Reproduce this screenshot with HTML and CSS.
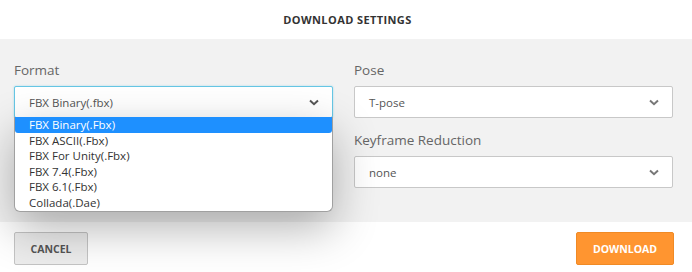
FILE: index.html
```html
<!DOCTYPE html>
<html>
<head>
    <title>Download Settings</title>
    <link rel="stylesheet" href="styles.css">
</head>
<body>
    <div class="dialog">
        <div class="title">DOWNLOAD SETTINGS</div>

        <div class="settings">
            <div class="column">
                <div class="form-group">
                    <label>Format</label>
                    <div class="select-wrap">
                        <div class="select focused">
                            <span>FBX Binary(.fbx)</span>
                            <svg class="chevron" width="10" height="7" viewBox="0 0 10 7"><path d="M1 1.5 L5 5.2 L9 1.5" fill="none" stroke="#555" stroke-width="2"/></svg>
                        </div>
                        <ul class="options">
                            <li class="active">FBX Binary(.Fbx)</li>
                            <li>FBX ASCII(.Fbx)</li>
                            <li>FBX For Unity(.Fbx)</li>
                            <li>FBX 7.4(.Fbx)</li>
                            <li>FBX 6.1(.Fbx)</li>
                            <li>Collada(.Dae)</li>
                        </ul>
                    </div>
                </div>
                <!-- second field sits under the open list -->
                <div class="form-group">
                    <div class="label-space"></div>
                    <div class="select"></div>
                </div>
            </div>

            <div class="column">
                <div class="form-group">
                    <label>Pose</label>
                    <div class="select">
                        <span>T-pose</span>
                        <svg class="chevron" width="10" height="7" viewBox="0 0 10 7"><path d="M1 1.5 L5 5.2 L9 1.5" fill="none" stroke="#777" stroke-width="2"/></svg>
                    </div>
                </div>
                <div class="form-group">
                    <label>Keyframe Reduction</label>
                    <div class="select">
                        <span>none</span>
                        <svg class="chevron" width="10" height="7" viewBox="0 0 10 7"><path d="M1 1.5 L5 5.2 L9 1.5" fill="none" stroke="#777" stroke-width="2"/></svg>
                    </div>
                </div>
            </div>
        </div>

        <div class="footer">
            <button class="btn cancel">CANCEL</button>
            <button class="btn download">DOWNLOAD</button>
        </div>
    </div>
</body>
</html>
```

FILE: styles.css
```css
body {
    margin: 0;
    font-family: "Open Sans", Arial, sans-serif;
    background-color: white;
}
.dialog {
    width: 692px;
    height: 272px;
    overflow: hidden;
}
.title {
    height: 39px;
    display: flex;
    align-items: center;
    justify-content: center;
    font-size: 11px;
    font-weight: bold;
    color: #333;
    letter-spacing: 0.4px;
    padding-left: 3px;
}
.settings {
    height: 183px;
    box-sizing: border-box;
    background-color: #f2f2f2;
    padding: 22px 19px 0 14px;
    display: grid;
    grid-template-columns: 1fr 1fr;
    column-gap: 21px;
}
.form-group {
    margin-bottom: 13px;
}
label {
    display: block;
    font-size: 13.5px;
    line-height: 18px;
    color: #666;
    margin-bottom: 7px;
}
.label-space {
    height: 18px;
    margin-bottom: 7px;
}
.select-wrap {
    position: relative;
    z-index: 2;
}
.select {
    height: 32px;
    box-sizing: border-box;
    background-color: white;
    border: 1px solid #c8c8c8;
    border-radius: 2px;
    padding: 0 13px 0 14px;
    display: flex;
    align-items: center;
    justify-content: space-between;
    font-size: 11.5px;
    color: #555;
}
.select.focused {
    border-color: #66c6e4;
    box-shadow: 0 0 2px rgba(102,198,228,0.6);
}
.options {
    position: absolute;
    top: 31px;
    left: 0;
    right: 0;
    margin: 0;
    padding: 0 0 1px 0;
    list-style: none;
    background-color: white;
    border: 1px solid #a0a0a0;
    border-top: none;
    border-radius: 0 0 6px 6px;
    box-shadow: 0 16px 45px rgba(0,0,0,0.3);
    font-size: 11.5px;
    color: #333;
}
.options li {
    height: 15.5px;
    line-height: 15.5px;
    padding-left: 14px;
}
.options li.active {
    background-color: #1e90ff;
    color: white;
    border-radius: 0 0 3px 3px;
}
.footer {
    height: 50px;
    box-sizing: border-box;
    padding: 10px 18px 0 14px;
    display: flex;
    justify-content: space-between;
    align-items: flex-start;
}
.btn {
    height: 33px;
    font-family: "Open Sans", Arial, sans-serif;
    font-size: 10.5px;
    font-weight: bold;
    border-radius: 2px;
    cursor: pointer;
}
.cancel {
    width: 74px;
    background-color: #ececec;
    border: 1px solid #c4c4c4;
    color: #555;
}
.download {
    width: 98px;
    background-color: #ff9530;
    border: 1px solid #f08a25;
    color: white;
}
```
